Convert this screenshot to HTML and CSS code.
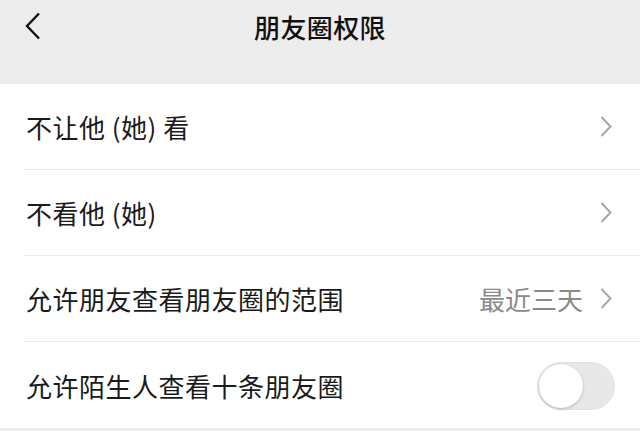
FILE: index.html
```html
<!DOCTYPE html>
<html lang="zh-CN">
<head>
<meta charset="utf-8">
<link rel="stylesheet" href="styles.css">
</head>
<body>
<div class="page">
  <header class="nav">
    <div class="nav-bar">
      <svg class="back" width="16" height="28" viewBox="0 0 16 28"><polyline points="14,1.5 2,14 14,26.5" fill="none" stroke="#111" stroke-width="2.4"/></svg>
      <div class="title">朋友圈权限</div>
    </div>
  </header>
  <main class="list">
    <div class="row">
      <span class="label">不让他 (她) 看</span>
      <span class="right"><svg class="chev" width="12" height="21" viewBox="0 0 12 21"><polyline points="1.5,1 10.5,10.5 1.5,20" fill="none" stroke="#a6a6a6" stroke-width="2"/></svg></span>
    </div>
    <div class="row">
      <span class="label">不看他 (她)</span>
      <span class="right"><svg class="chev" width="12" height="21" viewBox="0 0 12 21"><polyline points="1.5,1 10.5,10.5 1.5,20" fill="none" stroke="#a6a6a6" stroke-width="2"/></svg></span>
    </div>
    <div class="row">
      <span class="label">允许朋友查看朋友圈的范围</span>
      <span class="right"><span class="value">最近三天</span><svg class="chev" width="12" height="21" viewBox="0 0 12 21"><polyline points="1.5,1 10.5,10.5 1.5,20" fill="none" stroke="#a6a6a6" stroke-width="2"/></svg></span>
    </div>
    <div class="row last">
      <span class="label">允许陌生人查看十条朋友圈</span>
      <span class="right"><span class="toggle"><span class="knob"></span></span></span>
    </div>
  </main>
</div>
</body>
</html>
```

FILE: styles.css
```css
html, body {
  margin: 0;
  padding: 0;
  background: #ededed;
}
body {
  font-family: "Noto Sans CJK SC", "Noto Sans", sans-serif;
  color: #1a1a1a;
  width: 640px;
  height: 431px;
  overflow: hidden;
}
.page {
  display: flex;
  flex-direction: column;
}
.nav {
  height: 84px;
  background: #ededed;
}
.nav-bar {
  height: 52px;
  display: flex;
  align-items: center;
  justify-content: center;
  position: relative;
}
.back {
  position: absolute;
  left: 25px;
  top: 12px;
}
.title {
  font-size: 26px;
  font-weight: 500;
  color: #111;
  letter-spacing: 0.4px;
}
.list {
  background: #fff;
  padding-left: 24px;
}
.row {
  height: 85px;
  display: flex;
  align-items: center;
  justify-content: space-between;
  border-bottom: 1px solid #ececec;
  padding-right: 28px;
}
.row.last {
  border-bottom: none;
  height: 86px;
  padding-right: 25px;
}
.label {
  font-size: 26px;
  letter-spacing: 0.5px;
  padding-left: 2px;
}
.right {
  display: flex;
  align-items: center;
}
.value {
  font-size: 26px;
  color: #8a8a8a;
  margin-right: 17px;
}
.chev {
  display: block;
}
.toggle {
  width: 78px;
  height: 48px;
  border-radius: 24px;
  background: #e8e8e8;
  box-sizing: border-box;
  border: 1px solid #e2e2e2;
  position: relative;
  display: block;
  margin-top: 1px;
}
.knob {
  position: absolute;
  left: 1px;
  top: 1px;
  width: 44px;
  height: 44px;
  border-radius: 50%;
  background: #fff;
  box-shadow: 0 1px 3px rgba(0,0,0,0.22);
}
```
